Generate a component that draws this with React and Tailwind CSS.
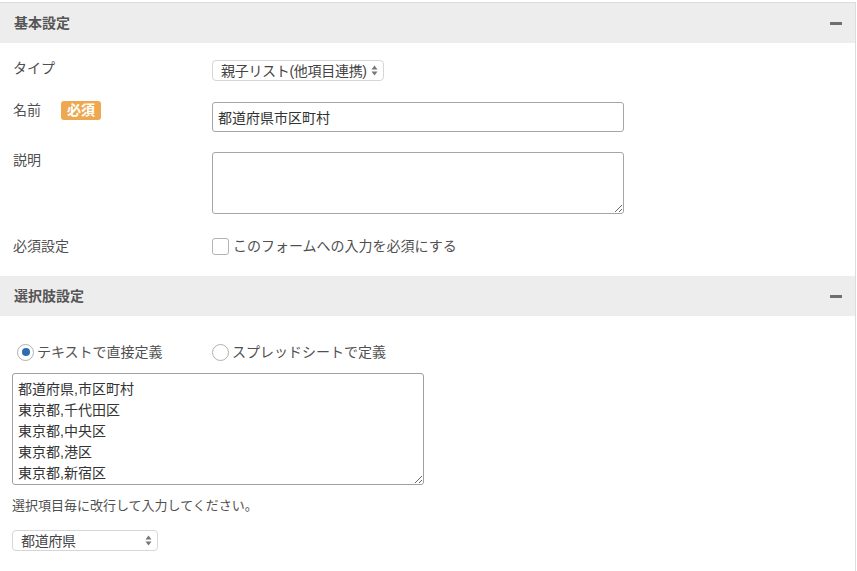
const FONT = "font-['Liberation_Sans','Noto_Sans_CJK_JP',sans-serif]"

const PREFS = '都道府県,市区町村\n東京都,千代田区\n東京都,中央区\n東京都,港区\n東京都,新宿区\n東京都,文京区'

function Arrows() {
  return (
    <svg width="7" height="11" viewBox="0 0 7 11" className="shrink-0">
      <path d="M3.5 0.5 L6.5 4.5 L0.5 4.5 Z" fill="#777" />
      <path d="M3.5 10.5 L6.5 6.5 L0.5 6.5 Z" fill="#777" />
    </svg>
  )
}

function FakeSelect({ label, width }) {
  return (
    <div
      className={`flex items-center justify-between gap-[3px] ${width} h-[21px] pl-[8px] pr-[5px] bg-white border border-[#d6d6d6] rounded-[4px] text-[14px] text-[#444] leading-none whitespace-nowrap`}
    >
      <span className="tracking-[-0.3px]">{label}</span>
      <Arrows />
    </div>
  )
}

function SectionHeader({ title }) {
  return (
    <div className="flex items-center justify-between h-10 bg-[#ededed] pl-[14px] pr-[13px]">
      <span className="text-[14px] font-bold text-[#555]">{title}</span>
      <span className="block w-[12px] h-[3px] bg-[#6f6f6f]" />
    </div>
  )
}

function Row({ label, badge, className, children }) {
  return (
    <div className={`flex items-start ${className}`}>
      <div className="flex items-start shrink-0 w-[212px] pl-[13px] leading-[20px] text-[14px] text-[#505050]">
        <span>{label}</span>
        {badge && (
          <span className="ml-[20px] mt-[1px] px-[6px] h-[19px] leading-[19px] rounded-[3px] bg-[#eea84f] text-white text-[14px] font-bold">
            {badge}
          </span>
        )}
      </div>
      <div className="mt-[2px]">{children}</div>
    </div>
  )
}

function Radio({ checked, label }) {
  return (
    <label className="flex items-center gap-[3px] text-[14px] text-[#505050] leading-[20px]">
      <span className="flex items-center justify-center w-[17px] h-[17px] rounded-full border-[1.5px] border-[#b0b0b0] bg-white">
        {checked && <span className="block w-[8px] h-[8px] rounded-full bg-[#2d6bb3]" />}
      </span>
      {label}
    </label>
  )
}

export default function App() {
  return (
    <div className={`w-[857px] h-[571px] bg-white overflow-hidden ${FONT}`}>
      <div className="mt-[2px] w-[856px] border-t border-r border-[#dcdcdc]">
        <SectionHeader title="基本設定" />

        <div className="pb-[20px]">
          <Row label="タイプ" className="mt-[15px]">
            <FakeSelect label="親子リスト(他項目連携)" width="w-[172px]" />
          </Row>

          <Row label="名前" badge="必須" className="mt-[19px]">
            <input
              readOnly
              value="都道府県市区町村"
              className="block w-[412px] h-[30px] px-[5px] border border-[#a6a6a6] rounded-[3px] text-[14px] text-[#333] outline-none"
            />
          </Row>

          <Row label="説明" className="mt-[18px]">
            <textarea
              readOnly
              defaultValue=""
              className="block w-[412px] h-[62px] px-[5px] py-[4px] border border-[#a6a6a6] rounded-[3px] text-[14px] text-[#333] outline-none"
            />
          </Row>

          <Row label="必須設定" className="mt-[22px]">
            <label className="flex items-center gap-[4px] text-[14px] text-[#505050] leading-[17px]">
              <span className="block w-[17px] h-[17px] rounded-[3px] border-[1.5px] border-[#b3b3b3] bg-white" />
              このフォームへの入力を必須にする
            </label>
          </Row>
        </div>

        <SectionHeader title="選択肢設定" />

        <div className="pl-[12px] pt-[26px] pb-[30px]">
          <div className="flex items-center">
            <div className="w-[200px] pl-[5px]">
              <Radio checked label="テキストで直接定義" />
            </div>
            <Radio label="スプレッドシートで定義" />
          </div>

          <textarea
            readOnly
            defaultValue={PREFS}
            className="block mt-[11px] w-[412px] h-[112px] pl-[5px] pr-[5px] pt-[5px] border border-[#a0a0a0] rounded-[3px] text-[14px] leading-[21px] text-[#333] outline-none"
          />

          <p className="mt-[12px] text-[13px] leading-[18px] text-[#505050]">
            選択項目毎に改行して入力してください。
          </p>

          <div className="mt-[15px]">
            <FakeSelect label="都道府県" width="w-[146px]" />
          </div>
        </div>
      </div>
    </div>
  )
}
